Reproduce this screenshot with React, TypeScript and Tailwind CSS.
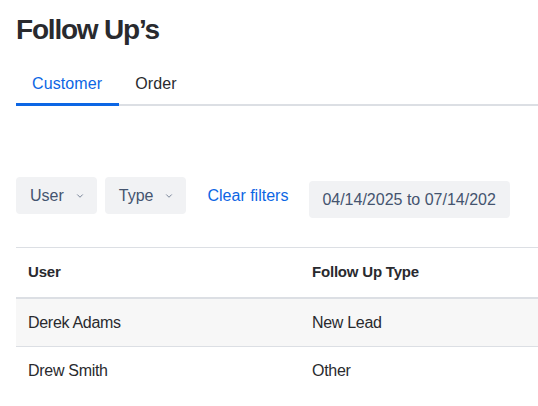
import { ChevronDown } from "lucide-react";

const rows = [
  { user: "Derek Adams", type: "New Lead" },
  { user: "Drew Smith", type: "Other" },
];

function FilterButton({ label }: { label: string }) {
  return (
    <button className="flex h-[37px] items-center gap-2 rounded-[4px] bg-[#f1f2f4] pl-[14px] pr-[9px] text-[16px] text-[#44546f]">
      {label}
      <ChevronDown className="h-[10px] w-4 text-[#626f86]" strokeWidth={2} />
    </button>
  );
}

export default function App() {
  return (
    <div
      className="min-h-screen overflow-hidden bg-white pl-4 pt-[14px] text-[#292a2e]"
      style={{ fontFamily: '"Liberation Sans", Arial, sans-serif' }}
    >
      <h1 className="text-[28px] font-bold leading-8 tracking-[-1.2px] text-[#292a2e]">Follow Up’s</h1>

      <div className="mt-[18px] flex border-b-2 border-[#dcdfe4]">
        <button className="relative pb-2 pl-4 pr-[17px] pt-2 text-[16px] leading-6 tracking-[0.1px] text-[#0c66e4]">
          Customer
          <span className="absolute -bottom-[2px] left-0 right-0 h-[3px] bg-[#0c66e4]" />
        </button>
        <button className="px-4 pb-2 pt-2 text-[16px] leading-6 tracking-[0.1px] text-[#292a2e]">Order</button>
      </div>

      <div className="mt-[71px] flex items-start gap-2">
        <FilterButton label="User" />
        <FilterButton label="Type" />
        <button className="flex h-[37px] items-center px-[13px] text-[16px] text-[#0c66e4]">
          Clear filters
        </button>
        <input
          readOnly
          value="04/14/2025 to 07/14/2025"
          className="mt-1 h-[37px] w-[201px] rounded-[4px] bg-[#f1f2f4] pl-[13px] pr-[14px] text-[16px] text-[#44546f] outline-none"
        />
      </div>

      <div className="mt-[29px] border-t border-[#dcdfe4]">
        <div className="flex h-[51px] items-center border-b-2 border-[#dcdfe4] text-[15px] font-bold tracking-[-0.2px]">
          <div className="w-[284px] pl-3">User</div>
          <div className="pl-3">Follow Up Type</div>
        </div>
        {rows.map((r, i) => (
          <div
            key={r.user}
            className={`flex h-[48px] items-center text-[16px] tracking-[-0.3px] ${
              i === 0 ? "border-b border-[#dcdfe4] bg-[#f7f7f7]" : "bg-white"
            }`}
          >
            <div className="w-[284px] pl-3">{r.user}</div>
            <div className="pl-3">{r.type}</div>
          </div>
        ))}
      </div>
    </div>
  );
}
